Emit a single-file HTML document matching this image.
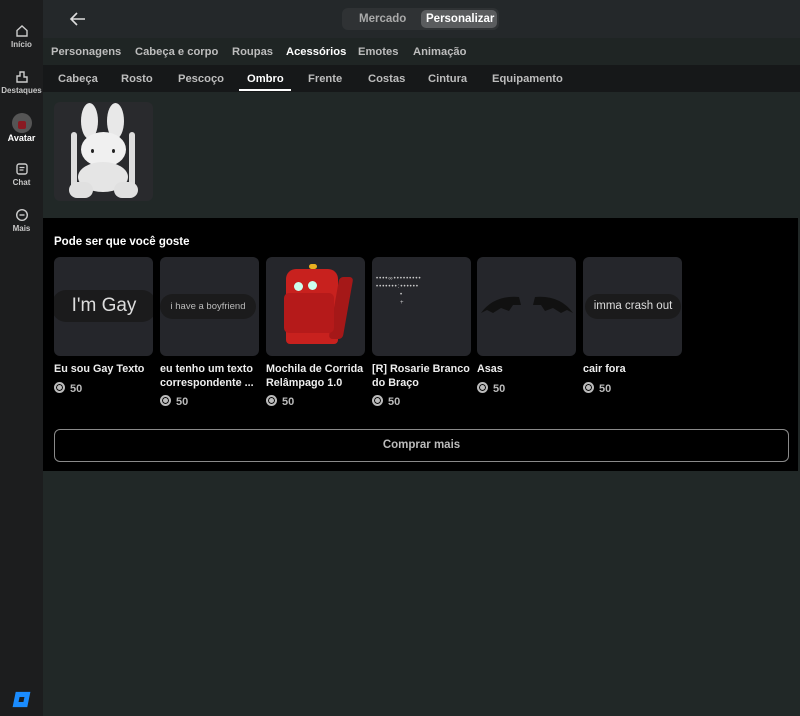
<!DOCTYPE html>
<html><head><meta charset="utf-8"><style>
*{margin:0;padding:0;box-sizing:border-box}
body{width:800px;height:716px;background:#212827;font-family:"Liberation Sans",sans-serif;color:#fff;position:relative;overflow:hidden}
.abs{position:absolute}
.side{left:0;top:0;width:43px;height:716px;background:#1c1d1e}
.si{position:absolute;left:0;width:43px;text-align:center;font-size:8px;font-weight:bold;color:#c8c8c8}
.hdr{left:43px;top:0;width:757px;height:38px;background:#24282a}
.tabs{left:43px;top:38px;width:757px;height:27px;background:#1f2524}
.sub{left:43px;top:65px;width:757px;height:27px;background:#161819}
.t{position:absolute;font-size:11.2px;font-weight:bold;color:#bdbdbd;top:8px;white-space:nowrap}
.black{left:43px;top:218px;width:755px;height:253px;background:#000}
.card{position:absolute;top:257px;width:99px;height:99px;background:#25262b;border-radius:6px;overflow:hidden}
.nm{position:absolute;top:362px;width:104px;font-size:10.8px;font-weight:bold;line-height:14px;color:#eee}
.pr{position:absolute;font-size:11px;font-weight:bold;color:#bbb}
.pr:before{content:"";display:inline-block;width:7px;height:7px;border:2px solid #bbb;border-radius:50%;margin-right:5px;vertical-align:-1px;box-shadow:inset 0 0 0 1px #000;background:#bbb}
.bub{position:absolute;background:#1b1b1c;border-radius:14px;color:#ddd;white-space:nowrap;text-align:center}
</style></head><body>
<div class="abs side"></div>
<div class="si" style="top:24px"><svg width="14" height="14" viewBox="0 0 14 14"><path d="M2 6.5L7 2l5 4.5V12H2z" fill="none" stroke="#ccc" stroke-width="1.4"/></svg><div>Início</div></div>
<div class="si" style="top:70px"><svg width="14" height="14" viewBox="0 0 14 14"><path d="M2 12V6h3V2h4v5h3v5z" fill="none" stroke="#ccc" stroke-width="1.4"/></svg><div>Destaques</div></div>
<div class="si" style="top:113px"><div style="width:20px;height:20px;border-radius:50%;background:#555;margin:0 auto;position:relative;overflow:hidden"><div style="position:absolute;left:6px;top:8px;width:8px;height:8px;background:#8a1a22;border-radius:2px"></div></div><div style="color:#fff;font-size:9px">Avatar</div></div>
<div class="si" style="top:162px"><svg width="14" height="14" viewBox="0 0 14 14"><rect x="2" y="2" width="10" height="10" rx="2" fill="none" stroke="#ccc" stroke-width="1.4"/><path d="M4.5 5.5h5M4.5 8h4" stroke="#ccc" stroke-width="1.2"/></svg><div>Chat</div></div>
<div class="si" style="top:208px"><svg width="14" height="14" viewBox="0 0 14 14"><circle cx="7" cy="7" r="5.3" fill="none" stroke="#ccc" stroke-width="1.4"/><path d="M4.5 7h5" stroke="#ccc" stroke-width="1.4"/></svg><div>Mais</div></div>
<div class="abs" style="left:14px;top:692px;width:15px;height:15px;background:#1a8cff;transform:skewY(-12deg) rotate(12deg)"><div style="position:absolute;left:5px;top:5px;width:5px;height:5px;background:#1c1d1e"></div></div>

<div class="abs hdr"></div>
<svg class="abs" style="left:69px;top:11px" width="18" height="16" viewBox="0 0 18 16"><path d="M16 8H2M8 2L2 8l6 6" fill="none" stroke="#ddd" stroke-width="1.6"/></svg>
<div class="abs" style="left:342px;top:8px;width:157px;height:22px;background:#2f3234;border-radius:6px"></div>
<div class="abs" style="left:421px;top:10px;width:76px;height:18px;background:#5a5c5e;border-radius:5px"></div>
<div class="abs" style="left:359px;top:13px;font-size:11.5px;font-weight:bold;color:#aaa">Mercado</div>
<div class="abs" style="left:426px;top:13px;font-size:11.5px;font-weight:bold;color:#fff">Personalizar</div>

<div class="abs tabs">
<span class="t" style="left:8px">Personagens</span>
<span class="t" style="left:92px">Cabeça e corpo</span>
<span class="t" style="left:189px">Roupas</span>
<span class="t" style="left:243px;color:#fff">Acessórios</span>
<span class="t" style="left:315px">Emotes</span>
<span class="t" style="left:370px">Animação</span>
</div>
<div class="abs sub">
<span class="t" style="left:15px">Cabeça</span>
<span class="t" style="left:78px">Rosto</span>
<span class="t" style="left:135px">Pescoço</span>
<span class="t" style="left:204px;color:#fff">Ombro</span>
<span class="t" style="left:265px">Frente</span>
<span class="t" style="left:325px">Costas</span>
<span class="t" style="left:385px">Cintura</span>
<span class="t" style="left:449px">Equipamento</span>
<div style="position:absolute;left:196px;top:24px;width:52px;height:2px;background:#fff"></div>
</div>

<div class="abs" style="left:54px;top:102px;width:99px;height:99px;background:#292a2d;border-radius:6px;overflow:hidden">
<div style="position:absolute;left:27px;top:1px;width:17px;height:36px;background:#e8e8e8;border-radius:50%"></div>
<div style="position:absolute;left:53px;top:1px;width:17px;height:36px;background:#e8e8e8;border-radius:50%"></div>
<div style="position:absolute;left:17px;top:30px;width:6px;height:58px;background:#ddd;border-radius:3px"></div>
<div style="position:absolute;left:75px;top:30px;width:6px;height:58px;background:#ddd;border-radius:3px"></div>
<div style="position:absolute;left:27px;top:30px;width:45px;height:35px;background:#f0f0f0;border-radius:50%"></div>
<div style="position:absolute;left:24px;top:60px;width:50px;height:30px;background:#e5e5e5;border-radius:50%"></div>
<div style="position:absolute;left:15px;top:80px;width:24px;height:16px;background:#e0e0e0;border-radius:8px"></div>
<div style="position:absolute;left:60px;top:80px;width:24px;height:16px;background:#e0e0e0;border-radius:8px"></div>
<div style="position:absolute;left:37px;top:47px;width:3px;height:4px;background:#222;border-radius:50%"></div>
<div style="position:absolute;left:58px;top:47px;width:3px;height:4px;background:#222;border-radius:50%"></div>
</div>

<div class="abs black"></div>
<div class="abs" style="left:54px;top:236px;font-size:11.5px;font-weight:bold">Pode ser que você goste</div>

<div class="card" style="left:54px"><div class="bub" style="left:-2px;top:33px;width:104px;height:32px;font-size:19px;line-height:32px">I'm Gay</div></div>
<div class="card" style="left:160px"><div class="bub" style="left:0;top:37px;width:96px;height:25px;font-size:9.5px;line-height:25px;color:#bbb">i have a boyfriend</div></div>
<div class="card" style="left:266px">
<div style="position:absolute;left:20px;top:12px;width:52px;height:75px;background:#c8211e;border-radius:10px 10px 4px 4px"></div>
<div style="position:absolute;left:68px;top:20px;width:14px;height:62px;background:#a51818;border-radius:4px;transform:skewX(-10deg)"></div>
<div style="position:absolute;left:18px;top:36px;width:50px;height:40px;background:#b51a1a;border-radius:5px"></div>
<div style="position:absolute;left:28px;top:25px;width:9px;height:9px;background:#cfe;border-radius:50%"></div>
<div style="position:absolute;left:42px;top:24px;width:9px;height:9px;background:#cfe;border-radius:50%"></div>
<div style="position:absolute;left:43px;top:7px;width:8px;height:5px;background:#e8b020;border-radius:3px"></div>
</div>
<div class="card" style="left:372px"><div style="position:absolute;left:4px;top:18px;width:90px;font-size:6px;letter-spacing:1px;color:#ccc;line-height:8px">••••∞•••••••••<br>•••••••:••••••<br>&nbsp;&nbsp;&nbsp;&nbsp;&nbsp;&nbsp;&nbsp;&nbsp;&nbsp;•<br>&nbsp;&nbsp;&nbsp;&nbsp;&nbsp;&nbsp;&nbsp;&nbsp;&nbsp;+</div></div>
<div class="card" style="left:477px"><svg style="position:absolute;left:2px;top:36px" width="96" height="22" viewBox="0 0 96 22"><path d="M2 20Q15 2 40 4L42 12 34 12 30 18 22 15 14 20 8 17z" fill="#111"/><path d="M94 20Q81 2 56 4L54 12 62 12 66 18 74 15 82 20 88 17z" fill="#111"/></svg></div>
<div class="card" style="left:583px"><div class="bub" style="left:2px;top:37px;width:96px;height:25px;font-size:11.5px;line-height:25px">imma crash out</div></div>

<div class="nm" style="left:54px">Eu sou Gay Texto</div>
<div class="nm" style="left:160px">eu tenho um texto correspondente ...</div>
<div class="nm" style="left:266px">Mochila de Corrida Relâmpago 1.0</div>
<div class="nm" style="left:372px">[R] Rosarie Branco do Braço</div>
<div class="nm" style="left:477px">Asas</div>
<div class="nm" style="left:583px">cair fora</div>
<div class="pr" style="left:54px;top:382px">50</div>
<div class="pr" style="left:160px;top:395px">50</div>
<div class="pr" style="left:266px;top:395px">50</div>
<div class="pr" style="left:372px;top:395px">50</div>
<div class="pr" style="left:477px;top:382px">50</div>
<div class="pr" style="left:583px;top:382px">50</div>

<div class="abs" style="left:54px;top:429px;width:735px;height:33px;border:1.5px solid #8a8a8a;border-radius:6px;text-align:center;line-height:31px;font-size:11.5px;font-weight:bold;color:#bbb">Comprar mais</div>
</body></html>
